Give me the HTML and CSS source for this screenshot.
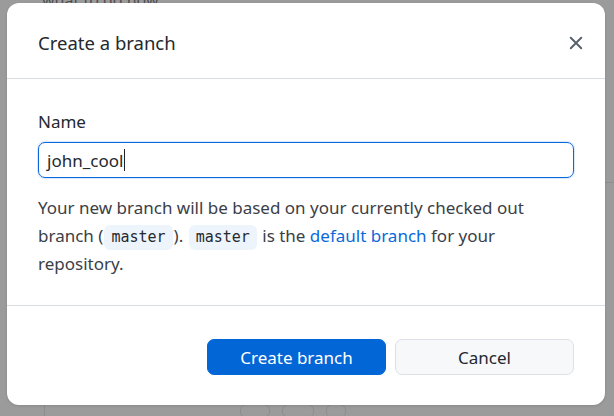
FILE: index.html
```html
<!DOCTYPE html>
<html lang="en">
<head>
<meta charset="utf-8">
<title>Create a branch</title>
<link rel="stylesheet" href="styles.css">
</head>
<body>
<div class="page">
  <div class="page-text">what to do now</div>
  <div class="page-rule"></div>
  <div class="page-vrule"></div>
  <div class="page-chips">
    <span class="chip chip-a"></span>
    <span class="chip chip-b"></span>
    <span class="chip chip-c"></span>
  </div>
</div>
<div class="backdrop">
  <div class="dialog" role="dialog" aria-labelledby="dlg-title">
    <header class="dialog-header">
      <h1 id="dlg-title" class="dialog-title">Create a branch</h1>
      <button class="close-btn" aria-label="Close">
        <svg width="16" height="16" viewBox="0 0 16 16" aria-hidden="true"><path d="M2 2L14 14M14 2L2 14"/></svg>
      </button>
    </header>
    <div class="dialog-body">
      <label class="field-label">Name</label>
      <div class="text-input" role="textbox">john_cool<span class="caret"></span></div>
      <p class="hint">Your new branch will be based on your currently checked out branch (<code class="code">master</code>). <code class="code">master</code> is the <a class="link" href="#">default branch</a> for your repository.</p>
    </div>
    <footer class="dialog-footer">
      <button class="btn btn-primary">Create branch</button>
      <button class="btn btn-default">Cancel</button>
    </footer>
  </div>
</div>
</body>
</html>
```
FILE: styles.css
```css
* { box-sizing: border-box; }
html, body { margin: 0; padding: 0; }
body {
  width: 614px;
  height: 416px;
  overflow: hidden;
  background: #fff;
  font-family: "Noto Sans", "Segoe UI", sans-serif;
  color: #1f2328;
  position: relative;
}
.page { position: absolute; inset: 0; }
.page-text { position: absolute; left: 42px; top: -11px; font-size: 16px; color: #1f2328; }
.page-rule { position: absolute; right: 0; top: 182px; width: 20px; height: 1px; background: #d0d7de; }
.page-vrule { position: absolute; left: 44px; top: 400px; width: 1px; height: 20px; background: #d0d7de; }
.page-chips { position: absolute; left: 240px; top: 404px; display: flex; gap: 12px; }
.chip { display: block; height: 14px; border: 1px solid #d0d7de; border-radius: 6px; }
.chip-a { width: 30px; }
.chip-b { width: 32px; }
.chip-c { width: 20px; }

.backdrop {
  position: absolute;
  inset: 0;
  background: rgba(102, 102, 102, 0.65);
  padding: 3px 9px 11px 7px;
}
.dialog {
  width: 598px;
  height: 402px;
  background: #fff;
  border-radius: 12px;
  display: flex;
  flex-direction: column;
  box-shadow: 0 1px 3px rgba(0,0,0,0.12);
}
.dialog-header {
  height: 76px;
  border-bottom: 1px solid #d8dee4;
  display: flex;
  align-items: center;
  justify-content: space-between;
  padding: 0 19px 0 31px;
  flex: none;
}
.dialog-title {
  margin: 0;
  font-size: 18.5px;
  font-weight: 400;
  color: #24292f;
  padding-top: 4px;
}
.close-btn {
  border: 0;
  background: transparent;
  padding: 0;
  width: 20px;
  height: 20px;
  display: flex;
  align-items: center;
  justify-content: center;
  margin-top: 5px;
}
.close-btn svg { width: 14px; height: 14px; fill: none; stroke: #57606a; stroke-width: 2.2; stroke-linecap: round; }
.dialog-body {
  flex: 1;
  padding: 32px 31px 0 31px;
  border-bottom: 1px solid #d8dee4;
}
.field-label {
  display: block;
  font-size: 17px;
  line-height: 22px;
  color: #24292f;
  margin-bottom: 9px;
}
.text-input {
  height: 36px;
  border: 1.5px solid #0969da;
  border-radius: 7px;
  padding: 0 8px;
  display: flex;
  align-items: center;
  font-size: 17px;
  color: #24292f;
  box-shadow: 0 0 0 1px rgba(9,105,218,0.15);
}
.caret { display: inline-block; width: 1px; height: 22px; background: #1f2328; margin-left: 1px; }
.hint {
  margin: 16px 0 0;
  font-size: 17px;
  line-height: 27.5px;
  color: #3b4047;
}
.code {
  display: inline-block;
  font-family: "DejaVu Sans Mono", monospace;
  font-size: 15px;
  line-height: 25px;
  background: #eef4fb;
  border-radius: 6px;
  padding: 0 7px;
  margin: 0 1px;
  color: #24292f;
}
.link { color: #0969da; text-decoration: none; }
.dialog-footer {
  height: 99px;
  flex: none;
  display: flex;
  justify-content: flex-end;
  align-items: flex-start;
  gap: 9px;
  padding: 33px 31px 0 31px;
}
.btn {
  width: 179px;
  height: 36px;
  border-radius: 7px;
  font-family: inherit;
  font-size: 17px;
}
.btn-primary {
  background: #0366d6;
  color: #fff;
  border: 1px solid #0366d6;
}
.btn-default {
  background: #f6f8fa;
  color: #24292f;
  border: 1px solid #dde1e5;
}
```
